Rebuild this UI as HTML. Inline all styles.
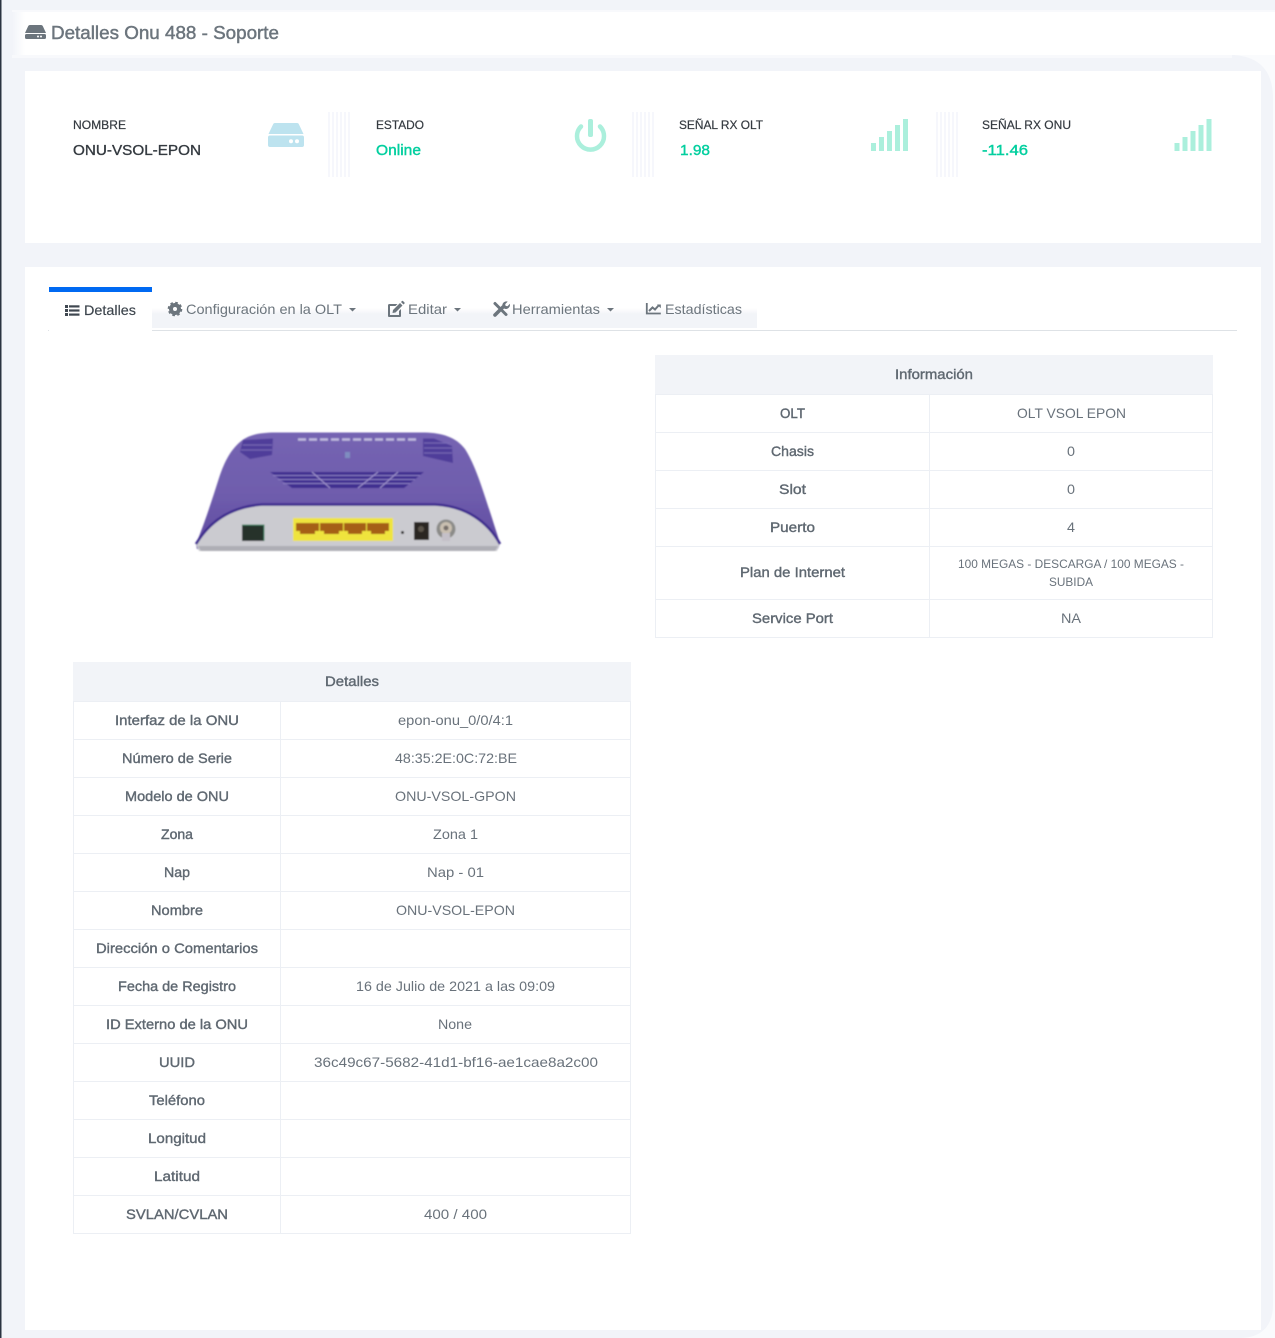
<!DOCTYPE html>
<html lang="es"><head><meta charset="utf-8"><title>Detalles Onu 488 - Soporte</title>
<style>
html,body{margin:0;padding:0;background:#f2f4f9;width:1275px;height:1338px;overflow:hidden}
svg{display:block;position:absolute;left:0;top:0}
text{font-family:"Liberation Sans",Arial,sans-serif;font-size:14px;fill:#6c757d}
.b{fill:#5f6871;stroke:#5f6871;stroke-width:.38px}
.l{font-size:12px;fill:#343a40;stroke:#343a40;stroke-width:.2px}
.t{fill:#69727b}
.g{fill:#03cf9f;stroke:#03cf9f;stroke-width:.4px;font-size:15px}
.line{stroke:#eceff4;stroke-width:1;fill:none}
</style></head><body>
<svg width="1275" height="1338" viewBox="0 0 1275 1338">
<defs>
<filter id="s" x="-5%" y="-5%" width="110%" height="110%"><feGaussianBlur stdDeviation="0.7"/></filter>
<pattern id="st" width="4" height="3" patternUnits="userSpaceOnUse"><rect width="2" height="3" fill="#f6f7fc"/></pattern>
<linearGradient id="tb" x1="0" y1="0" x2="0" y2="1"><stop offset="0" stop-color="#fff"/><stop offset=".3" stop-color="#f2f4f8"/><stop offset="1" stop-color="#f2f4f8"/></linearGradient>
<linearGradient id="hl" x1="0" y1="0" x2="1" y2="0"><stop offset="0" stop-color="#f2f4f9"/><stop offset="1" stop-color="#fff"/></linearGradient>
<linearGradient id="dome" x1="0" y1="0" x2="0" y2="1"><stop offset="0" stop-color="#7564b2"/><stop offset=".55" stop-color="#6e5cac"/><stop offset="1" stop-color="#5d489f"/></linearGradient>
<g id="bars" fill="#abefdc"><rect x="0" y="24" width="5" height="8"/><rect x="8" y="18" width="5" height="14"/><rect x="16" y="12" width="5" height="20"/><rect x="24" y="6" width="5" height="26"/><rect x="32" y="0" width="5" height="32"/></g>
</defs>
<rect width="1275" height="1338" fill="#f2f4f9"/>
<rect x="1235" y="55" width="40" height="1283" fill="#fafbfd"/>
<path d="M1230 55C1258 55 1273 70 1273 98V1305C1273 1325 1262 1338 1240 1338H1230Z" fill="#f2f4f9"/>
<rect x="0" y="0" width="1.500" height="1338" fill="#2b3341"/>
<rect x="25" y="12" width="1250" height="43" fill="#fff"/>
<rect x="12" y="12" width="13" height="43" fill="url(#hl)"/>
<rect x="12" y="55" width="1220" height="3" fill="#f8f9fc"/>
<rect x="12" y="10" width="1263" height="2" fill="#f8f9fc"/>
<rect x="25" y="71" width="1236" height="172" fill="#fff"/>
<rect x="25" y="267" width="1236" height="1063" fill="#fff"/>

<path fill="#6c757d" d="M30 25h11q1.400 0 2 1.500l3 6.500h-21l3-6.500q.6-1.500 2-1.500zM26.500 34h18q1.500 0 1.500 1.500v2q0 1.500-1.500 1.500h-18q-1.500 0-1.500-1.500v-2q0-1.500 1.500-1.500z"/>
<circle cx="41" cy="36.500" r="1" fill="#fff"/><circle cx="38" cy="36.500" r="1" fill="#fff"/>
<text x="51" y="39" style="font-size:18px;stroke:#6c757d;stroke-width:.45px" textLength="228" lengthAdjust="spacingAndGlyphs">Detalles Onu 488 - Soporte</text>

<text class="l" x="73" y="129" textLength="53" lengthAdjust="spacingAndGlyphs">NOMBRE</text>
<text x="73" y="155" style="font-size:15px;fill:#343a40;stroke:#343a40;stroke-width:.35px" textLength="128" lengthAdjust="spacingAndGlyphs">ONU-VSOL-EPON</text>
<path fill="#bde3ef" d="M275 123h22q1.500 0 2 1.500l4.500 9.500h-35l4.500-9.500q.5-1.500 2-1.500zM270 135.500h32q2 0 2 2v7.500q0 2-2 2h-32q-2 0-2-2v-7.500q0-2 2-2z"/>
<circle cx="297" cy="141.300" r="2" fill="#fff"/><circle cx="291" cy="141.300" r="2" fill="#fff"/>
<rect x="328" y="112" width="24" height="65" fill="url(#st)"/>

<text class="l" x="376" y="129" textLength="48" lengthAdjust="spacingAndGlyphs">ESTADO</text>
<text class="g" x="376" y="155" textLength="45" lengthAdjust="spacingAndGlyphs">Online</text>
<path d="M581 126.500a13.500 13.500 0 1 0 19 0" fill="none" stroke="#abefdc" stroke-width="4.500" stroke-linecap="round"/>
<rect x="588" y="119" width="5" height="18" rx="2" fill="#abefdc"/>
<rect x="631" y="112" width="24" height="65" fill="url(#st)"/>

<text class="l" x="679" y="129" textLength="84" lengthAdjust="spacingAndGlyphs">SEÑAL RX OLT</text>
<text class="g" x="680" y="155" textLength="30" lengthAdjust="spacingAndGlyphs">1.98</text>
<use href="#bars" x="871" y="119"/>
<rect x="934" y="112" width="24" height="65" fill="url(#st)"/>

<text class="l" x="982" y="129" textLength="89" lengthAdjust="spacingAndGlyphs">SEÑAL RX ONU</text>
<text class="g" x="982" y="155" textLength="46" lengthAdjust="spacingAndGlyphs">-11.46</text>
<use href="#bars" x="1174.500" y="119"/>

<!-- Tabs -->
<rect x="152" y="308" width="605" height="20" fill="url(#tb)"/>
<line x1="48" y1="330.500" x2="1237" y2="330.500" stroke="#dee2e6"/>
<rect x="49" y="292" width="103" height="40" fill="#fff"/>
<rect x="49" y="287" width="103" height="5" fill="#0069f2"/>
<g fill="#3f4750"><rect x="65" y="305" width="3" height="3"/><rect x="65" y="309" width="3" height="3"/><rect x="65" y="313" width="3" height="3"/><rect x="69" y="305.300" width="10.500" height="2.200"/><rect x="69" y="309.400" width="10.500" height="2.200"/><rect x="69" y="313.500" width="10.500" height="2.200"/></g>
<text x="84" y="315" style="fill:#3c444c;stroke:#3c444c;stroke-width:.15px" textLength="52" lengthAdjust="spacingAndGlyphs">Detalles</text>

<circle cx="175" cy="309" r="4" fill="none" stroke="#6c757d" stroke-width="4"/>
<circle cx="175" cy="309" r="6.300" fill="none" stroke="#6c757d" stroke-width="2" stroke-dasharray="2.600 2.350"/>
<text x="186" y="314" textLength="156" lengthAdjust="spacingAndGlyphs">Configuración en la OLT</text>
<path d="M349 308h7l-3.500 3.500z" fill="#6c757d"/>

<path d="M388 305.500q0-1.500 1.500-1.500h8l-2 2h-5.500v9h9v-4l2-2v7q0 1-1 1h-11q-1 0-1-1zM393 310l7-7 2.500 2.500-7 7-3 .5zM401 302l1-1q.6-.5 1 0l1.500 1.500q.5.5 0 1l-1 1z" fill="#6c757d"/>
<text x="408" y="314" textLength="39" lengthAdjust="spacingAndGlyphs">Editar</text>
<path d="M454 308h7l-3.500 3.500z" fill="#6c757d"/>

<path d="M495 315l8-8" stroke="#6c757d" stroke-width="3.600" fill="none" stroke-linecap="round"/>
<path d="M495 303.500l11 11" stroke="#6c757d" stroke-width="3" fill="none" stroke-linecap="round"/>
<path d="M502.500 307q-.8-3.500 1.800-5 1.700-.9 3.400-.4l-2.500 2.500.4 1.800 1.800.4 2.500-2.500q.5 3-1.900 4.600-2 1.200-3.900.1z" fill="#6c757d"/>
<text x="512" y="314" textLength="88" lengthAdjust="spacingAndGlyphs">Herramientas</text>
<path d="M607 308h7l-3.500 3.500z" fill="#6c757d"/>

<path d="M646.800 303v10.500h14" fill="none" stroke="#6c757d" stroke-width="1.800"/>
<path d="M649 311l3.500-3.500 2.500 2 4-4.500" fill="none" stroke="#6c757d" stroke-width="2"/>
<path d="M657 304.500h3.800v3.800z" fill="#6c757d"/>
<text x="665" y="314" textLength="77" lengthAdjust="spacingAndGlyphs">Estadísticas</text>

<!-- Router image -->
<g filter="url(#s)">
<path d="M196 544C205 522 212 500 219 478 225 460 231 450 240 442 248 435 258 433 272 432.500L425 432.500C442 433 456 437 465 449 476 466 484 494 492 518 495 528 498 536 500 544L498 549H197Z" fill="url(#dome)"/>
<path d="M196 544C208 524 228 507 262 504.500H435C466 506 488 522 500 544L497 551H199Z" fill="#cbcbd0"/>
<path d="M196 544C208 524 228 507 262 504.500H435C466 506 488 522 500 544" fill="none" stroke="#3d2b8e" stroke-width="2.600"/>
<path d="M198 546H498L495 551H201Z" fill="#aeaeb5"/>
<path d="M270 472H424L404 488H292Z" fill="#3f2e90"/>
<path d="M273 475.500H420M278 479.500H415M283 483.500H410" stroke="#8f81c4" stroke-width="1.100"/>
<path d="M312 472l18 16M358 488l20-16M380 488l18-16" stroke="#a79bd0" stroke-width="1"/>
<path d="M298 439.500H418" stroke="#c0b9de" stroke-width="2.600" stroke-dasharray="8 3"/>
<path d="M243 440L273 438.500 272 455 250 459 240 452Z" fill="#4f3d9a"/>
<path d="M423 438.500L434 438.500 452 446 453 463 423 456Z" fill="#4f3d9a"/>
<path d="M243 445H272M241 450H272M424 443H450M424 448H452M424 453H452" stroke="#7c6db8" stroke-width="1"/>
<rect x="345" y="452" width="5" height="6" fill="#7e8dc0"/>
<rect x="242" y="525" width="22" height="16" fill="#27302c"/>
<path d="M242 525h22v16" fill="none" stroke="#3d8a66" stroke-width="1"/>
<rect x="293" y="518" width="100" height="23" fill="#efe43c"/>
<g fill="#a55f16"><path d="M296 523h23v8h-4v3h-15v-3h-4z"/><path d="M320 523h23v8h-4v3h-15v-3h-4z"/><path d="M344 523h22v8h-4v3h-14v-3h-4z"/><path d="M367 523h22v8h-4v3h-14v-3h-4z"/></g>
<circle cx="402.500" cy="532.500" r="1.500" fill="#222"/>
<rect x="414" y="522" width="15" height="18" fill="#2a2622"/>
<circle cx="421" cy="529" r="3" fill="#5a5248"/>
<circle cx="446" cy="529" r="9.500" fill="#8b8b88"/>
<circle cx="446" cy="528" r="6" fill="#c9bfb0"/>
<rect x="442" y="533" width="8" height="8" fill="#c4c0c8"/>
<circle cx="446" cy="528" r="2.500" fill="#77706a"/>
</g>

<!-- Información table -->
<rect x="655" y="355" width="558" height="39.500" fill="#f2f4f8"/>
<path class="line" d="M655.500 394.500V637.500H1212.500V394.500ZM655.500 432.500H1212.500M655.500 470.500H1212.500M655.500 508.500H1212.500M655.500 546.500H1212.500M655.500 599.500H1212.500M929.500 394.500V637.500"/>
<text class="b" x="895" y="379" textLength="78" lengthAdjust="spacingAndGlyphs">Información</text>
<text class="b" x="780" y="418" textLength="25" lengthAdjust="spacingAndGlyphs">OLT</text>
<text class="t" x="1017" y="418" textLength="109" lengthAdjust="spacingAndGlyphs">OLT VSOL EPON</text>
<text class="b" x="771" y="456" textLength="43" lengthAdjust="spacingAndGlyphs">Chasis</text>
<text class="t" x="1067" y="456" textLength="8" lengthAdjust="spacingAndGlyphs">0</text>
<text class="b" x="779" y="494" textLength="27" lengthAdjust="spacingAndGlyphs">Slot</text>
<text class="t" x="1067" y="494" textLength="8" lengthAdjust="spacingAndGlyphs">0</text>
<text class="b" x="770" y="532" textLength="45" lengthAdjust="spacingAndGlyphs">Puerto</text>
<text class="t" x="1067" y="532" textLength="8" lengthAdjust="spacingAndGlyphs">4</text>
<text class="b" x="740" y="577" textLength="105" lengthAdjust="spacingAndGlyphs">Plan de Internet</text>
<text class="t" x="958" y="568" style="font-size:12px" textLength="226" lengthAdjust="spacingAndGlyphs">100 MEGAS - DESCARGA / 100 MEGAS -</text>
<text class="t" x="1049" y="586" style="font-size:12px" textLength="44" lengthAdjust="spacingAndGlyphs">SUBIDA</text>
<text class="b" x="752" y="623" textLength="81" lengthAdjust="spacingAndGlyphs">Service Port</text>
<text class="t" x="1061" y="623" textLength="20" lengthAdjust="spacingAndGlyphs">NA</text>

<!-- Detalles table -->
<rect x="73" y="662" width="558" height="39.500" fill="#f2f4f8"/>
<path class="line" d="M73.500 701.500V1233.500H630.500V701.500ZM73.500 739.500H630.500M73.500 777.500H630.500M73.500 815.500H630.500M73.500 853.500H630.500M73.500 891.500H630.500M73.500 929.500H630.500M73.500 967.500H630.500M73.500 1005.500H630.500M73.500 1043.500H630.500M73.500 1081.500H630.500M73.500 1119.500H630.500M73.500 1157.500H630.500M73.500 1195.500H630.500M280.500 701.500V1233.500"/>
<text class="b" x="325" y="686" textLength="54" lengthAdjust="spacingAndGlyphs">Detalles</text>
<text class="b" x="115" y="725" textLength="124" lengthAdjust="spacingAndGlyphs">Interfaz de la ONU</text>
<text class="t" x="398" y="725" textLength="115" lengthAdjust="spacingAndGlyphs">epon-onu_0/0/4:1</text>
<text class="b" x="122" y="763" textLength="110" lengthAdjust="spacingAndGlyphs">Número de Serie</text>
<text class="t" x="395" y="763" textLength="122" lengthAdjust="spacingAndGlyphs">48:35:2E:0C:72:BE</text>
<text class="b" x="125" y="801" textLength="104" lengthAdjust="spacingAndGlyphs">Modelo de ONU</text>
<text class="t" x="395" y="801" textLength="121" lengthAdjust="spacingAndGlyphs">ONU-VSOL-GPON</text>
<text class="b" x="161" y="839" textLength="32" lengthAdjust="spacingAndGlyphs">Zona</text>
<text class="t" x="433" y="839" textLength="45" lengthAdjust="spacingAndGlyphs">Zona 1</text>
<text class="b" x="164" y="877" textLength="26" lengthAdjust="spacingAndGlyphs">Nap</text>
<text class="t" x="427" y="877" textLength="57" lengthAdjust="spacingAndGlyphs">Nap - 01</text>
<text class="b" x="151" y="915" textLength="52" lengthAdjust="spacingAndGlyphs">Nombre</text>
<text class="t" x="396" y="915" textLength="119" lengthAdjust="spacingAndGlyphs">ONU-VSOL-EPON</text>
<text class="b" x="96" y="953" textLength="162" lengthAdjust="spacingAndGlyphs">Dirección o Comentarios</text>
<text class="b" x="118" y="991" textLength="118" lengthAdjust="spacingAndGlyphs">Fecha de Registro</text>
<text class="t" x="356" y="991" textLength="199" lengthAdjust="spacingAndGlyphs">16 de Julio de 2021 a las 09:09</text>
<text class="b" x="106" y="1029" textLength="142" lengthAdjust="spacingAndGlyphs">ID Externo de la ONU</text>
<text class="t" x="438" y="1029" textLength="34" lengthAdjust="spacingAndGlyphs">None</text>
<text class="b" x="159" y="1067" textLength="36" lengthAdjust="spacingAndGlyphs">UUID</text>
<text class="t" x="314" y="1067" textLength="284" lengthAdjust="spacingAndGlyphs">36c49c67-5682-41d1-bf16-ae1cae8a2c00</text>
<text class="b" x="149" y="1105" textLength="56" lengthAdjust="spacingAndGlyphs">Teléfono</text>
<text class="b" x="148" y="1143" textLength="58" lengthAdjust="spacingAndGlyphs">Longitud</text>
<text class="b" x="154" y="1181" textLength="46" lengthAdjust="spacingAndGlyphs">Latitud</text>
<text class="b" x="126" y="1219" textLength="102" lengthAdjust="spacingAndGlyphs">SVLAN/CVLAN</text>
<text class="t" x="424" y="1219" textLength="63" lengthAdjust="spacingAndGlyphs">400 / 400</text>
</svg>
</body></html>
